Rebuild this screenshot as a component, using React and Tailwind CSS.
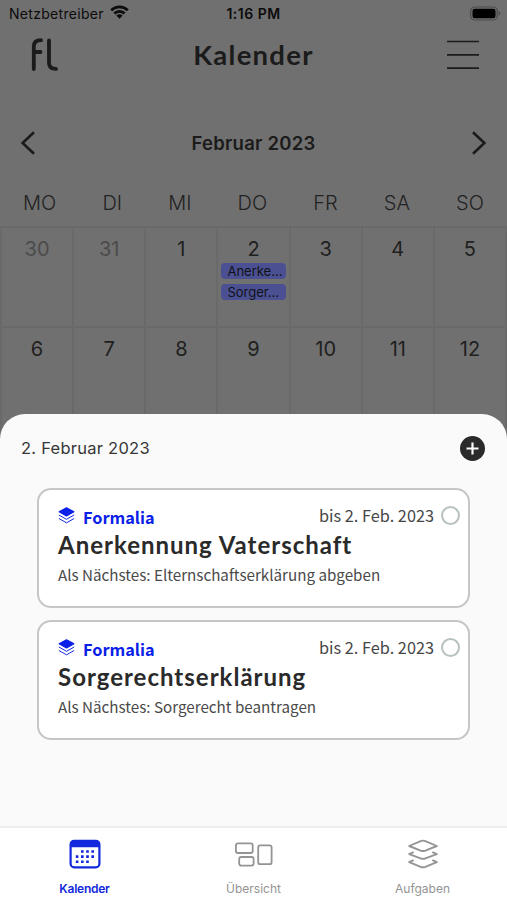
const WEEKDAYS = ['MO', 'DI', 'MI', 'DO', 'FR', 'SA', 'SO'];

const DAYS = [
  { day: 30, muted: true },
  { day: 31, muted: true },
  { day: 1 },
  { day: 2, events: ['Anerke...', 'Sorger...'] },
  { day: 3 },
  { day: 4 },
  { day: 5 },
  { day: 6 },
  { day: 7 },
  { day: 8 },
  { day: 9 },
  { day: 10 },
  { day: 11 },
  { day: 12 },
];

const TASKS = [
  {
    category: 'Formalia',
    due: 'bis 2. Feb. 2023',
    title: 'Anerkennung Vaterschaft',
    next: 'Als Nächstes: Elternschaftserklärung abgeben',
  },
  {
    category: 'Formalia',
    due: 'bis 2. Feb. 2023',
    title: 'Sorgerechtserklärung',
    next: 'Als Nächstes: Sorgerecht beantragen',
  },
];

function StatusBar() {
  return (
    <div className="grid h-7 grid-cols-3 items-center pr-[6px] pb-[2px] pl-[9px] text-[14px] text-[#0c0c0c]">
      <div className="flex items-center gap-[6px]">
        <span className="tracking-[0.3px]">Netzbetreiber</span>
        <svg className="-mt-[2px] h-[14px] w-[19px]" viewBox="0 0 19 14" fill="none" stroke="currentColor" strokeWidth="2.7">
          <path d="M1.2 5.2a11.8 11.8 0 0 1 16.6 0" />
          <path d="M4.4 8.5a7.2 7.2 0 0 1 10.2 0" />
          <path d="M9.5 13.8 6.4 10.6a4.4 4.4 0 0 1 6.2 0z" fill="currentColor" stroke="none" />
        </svg>
      </div>
      <span className="pr-[3px] text-center font-semibold tracking-[0.5px]">1:16 PM</span>
      <svg className="h-[15px] w-[31px] justify-self-end" viewBox="0 0 31 15">
        <rect x="0.7" y="1" width="26.5" height="13" rx="4" fill="none" stroke="#4b4b4b" strokeWidth="1.2" />
        <rect x="2.5" y="2.8" width="23" height="9.4" rx="2.2" fill="#000" />
        <path d="M28.6 5.3v4.4c1-.4 1.6-1.2 1.6-2.2s-.6-1.8-1.6-2.2z" fill="#4b4b4b" />
      </svg>
    </div>
  );
}

function Header() {
  return (
    <header className="flex h-[54px] items-center justify-between pr-[28px] pl-[31px] text-[#1b1b1b]">
      <svg className="h-[34px] w-8" viewBox="0 0 32 34" fill="none" stroke="currentColor" strokeWidth="3.8" strokeLinecap="round" aria-label="fl">
        <path d="M2.8 31V8.6C2.8 4.6 5.4 2.2 10 2.2M2.8 14h6.7" />
        <path d="M18 2.4v22.3c0 4 2.2 6.2 7 6.2" />
      </svg>
      <h1 className="pr-[3px] font-[Lato,sans-serif] text-[27.5px] font-bold tracking-[1.25px]">Kalender</h1>
      <svg className="h-[30px] w-8" viewBox="0 0 32 30" stroke="currentColor" strokeWidth="1.7">
        <path d="M0 1.5h32M0 14.8h32M0 28.2h32" />
      </svg>
    </header>
  );
}

function MonthNav() {
  return (
    <div className="mt-[37px] flex h-12 items-center justify-between px-[20px] text-[#1b1b1b]">
      <svg className="h-6 w-[15px]" viewBox="0 0 15 24" fill="none" stroke="currentColor" strokeWidth="2.6">
        <path d="M14 1.2 2.6 12 14 22.8" />
      </svg>
      <h2 className="mt-[2px] text-[18.5px] font-semibold tracking-[0.25px]">Februar 2023</h2>
      <svg className="h-6 w-[15px]" viewBox="0 0 15 24" fill="none" stroke="currentColor" strokeWidth="2.6">
        <path d="M1 1.2 12.4 12 1 22.8" />
      </svg>
    </div>
  );
}

function Calendar() {
  return (
    <div>
      <div className="mt-[11px] flex h-12 items-center justify-around pt-px text-[20px] font-light text-[#222222]">
        {WEEKDAYS.map((name) => (
          <span key={name}>{name}</span>
        ))}
      </div>
      <div className="grid h-[214px] auto-rows-[100px] grid-cols-7 overflow-hidden border-t-2 border-l-2 border-[#6a6a6a]">
        {DAYS.map(({ day, muted, events = [] }) => (
          <div key={day} className="border-r-2 border-b-2 border-[#6a6a6a] px-[3px] pt-[7px]">
            <p className={`text-center text-[20px] leading-[29px] ${muted ? 'text-[#4b4b4b]' : 'text-[#202020]'}`}>{day}</p>
            <div className="-mt-px flex flex-col gap-[5px]">
              {events.map((event) => (
                <span key={event} className="h-4 rounded-[4px] bg-[#4b5092] pl-[6px] text-[13px] leading-4 text-[#111318]">
                  {event}
                </span>
              ))}
            </div>
          </div>
        ))}
      </div>
    </div>
  );
}

function TaskCard({ task }) {
  return (
    <article className="h-[120px] rounded-[14px] border-2 border-[#c6c6c6] bg-white pt-[14px] pr-[8px] pl-[19px] font-['Noto_Sans_CJK_SC',sans-serif]">
      <div className="flex h-6 items-center justify-between">
        <div className="flex items-center text-[#0a20e8]">
          <svg className="-mt-[2px] h-[17px] w-[17px]" viewBox="0 0 16 16" fill="none" stroke="currentColor" strokeLinejoin="round">
            <path d="M8 .7 15 4.5 8 8.5 1 4.5z" fill="currentColor" />
            <path d="M.8 7.5 8 11.6l7.2-4.1M.8 10.8 8 14.9l7.2-4.1" strokeWidth="0.9" />
          </svg>
          <span className="mt-[2px] ml-2 text-[16.3px] leading-6 font-bold">{task.category}</span>
        </div>
        <div className="flex items-center gap-[7px] text-[16.3px] leading-6 text-[#464646]">
          <span className="-mt-[3px]">{task.due}</span>
          <span className="-mt-[2px] size-[19px] rounded-full border-2 border-[#b6c1c0]" />
        </div>
      </div>
      <h3 className="font-[Lato,sans-serif] text-[24px] leading-[34px] font-bold tracking-[1px] text-[#2a2a2a]">{task.title}</h3>
      <p className="text-[15.2px] leading-[25px] text-[#4a4a4a]">{task.next}</p>
    </article>
  );
}

function DaySheet() {
  return (
    <section className="relative -mt-[26px] flex-1 rounded-t-[25px] bg-[#fafafa]">
      <div className="flex h-[68px] items-center justify-between pr-[22px] pl-[21px]">
        <span className="mt-px text-[16.5px] tracking-[0.25px] text-[#363636]">2. Februar 2023</span>
        <svg className="size-[25px]" viewBox="0 0 25 25">
          <circle cx="12.5" cy="12.5" r="12.5" fill="#2a2a2a" />
          <path d="M12.5 6.5v12M6.5 12.5h12" stroke="#fafafa" strokeWidth="2.2" />
        </svg>
      </div>
      <div className="flex flex-col gap-3 pt-[6px] pr-[37px] pl-[37px]">
        {TASKS.map((task) => (
          <TaskCard key={task.title} task={task} />
        ))}
      </div>
    </section>
  );
}

function CalendarIcon() {
  return (
    <svg className="h-[30px] w-8" viewBox="0 0 32 30">
      <rect x="1.6" y="1.8" width="28.8" height="26.6" rx="3.6" fill="none" stroke="currentColor" strokeWidth="2.2" />
      <path d="M1.5 8.2V4.6C1.5 2.8 2.8 1.5 4.6 1.5h22.8c1.8 0 3.1 1.3 3.1 3.1v3.6z" fill="currentColor" />
      <path d="M12 12.5h13M6.8 17.6h18.2M6.8 22.7h13" stroke="currentColor" strokeWidth="2.6" strokeDasharray="2.6 2.6" />
    </svg>
  );
}

function OverviewIcon() {
  return (
    <svg className="h-[30px] w-[38px]" viewBox="0 0 38 30" fill="none" stroke="currentColor" strokeWidth="1.8">
      <rect x="0.9" y="4.4" width="16.8" height="9.6" rx="2" />
      <rect x="4.2" y="18" width="14.4" height="8.6" rx="2" />
      <rect x="23.2" y="6.4" width="13.4" height="18.8" rx="2" />
    </svg>
  );
}

function TasksIcon() {
  return (
    <svg className="h-[30px] w-[30px]" viewBox="0 0 30 30" fill="none" stroke="currentColor" strokeWidth="1.9" strokeLinejoin="round" strokeLinecap="round">
      <path d="M1.2 7 12.6 2.1c1.6-.6 3.2-.6 4.8 0L28.8 7l-11.4 4.6c-1.6.6-3.2.6-4.8 0z" />
      <path d="M5 13.4 1.2 15.2l11.4 4.2c1.6.6 3.2.6 4.8 0l11.4-4.2-3.8-1.8" />
      <path d="M5 21.4 1.2 23.2l11.4 4.6c1.6.6 3.2.6 4.8 0l11.4-4.6-3.8-1.8" />
    </svg>
  );
}

const TABS = [
  { label: 'Kalender', icon: CalendarIcon, active: true },
  { label: 'Übersicht', icon: OverviewIcon },
  { label: 'Aufgaben', icon: TasksIcon },
];

function TabBar() {
  return (
    <nav className="grid h-[74px] grid-cols-3 border-t-2 border-[#ededed] bg-white pt-[11px]">
      {TABS.map(({ label, icon: Icon, active }) => (
        <button
          key={label}
          className={`flex flex-col items-center text-[12px] ${active ? 'font-semibold tracking-[-0.25px] text-[#1228dc]' : 'font-normal text-[#949494]'}`}
        >
          <Icon />
          <span className="mt-[12px] leading-4">{label}</span>
        </button>
      ))}
    </nav>
  );
}

export default function App() {
  return (
    <div className="flex h-screen flex-col overflow-hidden bg-[#707070] font-[Inter,sans-serif]">
      <StatusBar />
      <Header />
      <MonthNav />
      <Calendar />
      <DaySheet />
      <TabBar />
    </div>
  );
}
